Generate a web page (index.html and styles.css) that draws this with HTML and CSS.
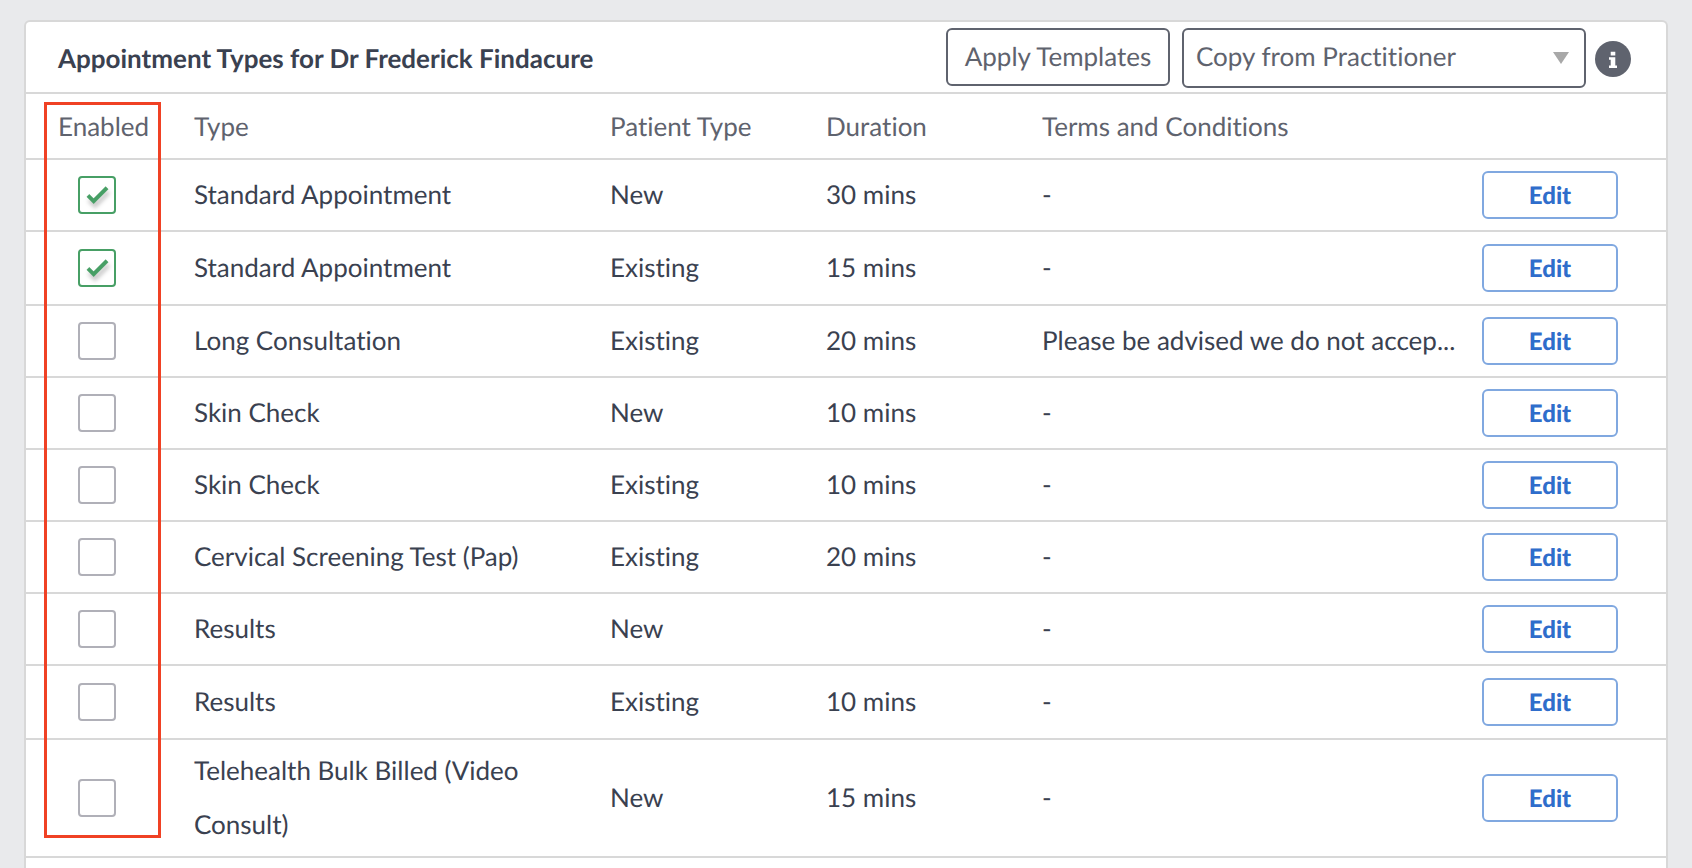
FILE: index.html
```html
<!DOCTYPE html>
<html lang="en">
<head>
  <meta charset="UTF-8">
  <meta name="viewport" content="width=device-width, initial-scale=1.0">
  <title>Appointment Types</title>
  <link rel="stylesheet" href="styles.css">
</head>
<body>
  <div class="card">
    <!-- Header -->
    <div class="card-header">
      <h1>Appointment Types for Dr Frederick Findacure</h1>
      <button type="button" class="btn-templates">Apply Templates</button>
      <div class="select-wrap">
        <select aria-label="Copy from Practitioner">
          <option>Copy from Practitioner</option>
        </select>
      </div>
      <button type="button" class="info" aria-label="Information">
        <svg viewBox="0 0 36 36" width="36" height="36">
          <circle cx="18" cy="18" r="18" fill="#5f636e"/>
          <path d="M15.700 10.700h4.600v3.900h-4.600z M14 16.300h6.300v8.200h1.700v2.500h-8v-2.500h1.700v-5.700h-1.700z" fill="#fff"/>
        </svg>
      </button>
    </div>

    <!-- Appointment types -->
    <div class="table-wrap">
      <table>
        <colgroup>
          <col class="col-enabled">
          <col class="col-type">
          <col class="col-patient">
          <col class="col-duration">
          <col class="col-terms">
          <col class="col-edit">
        </colgroup>
        <thead>
          <tr>
            <th>Enabled</th>
            <th>Type</th>
            <th>Patient Type</th>
            <th>Duration</th>
            <th>Terms and Conditions</th>
            <th></th>
          </tr>
        </thead>
        <tbody>
          <tr>
            <td><input type="checkbox" aria-label="Enable Standard Appointment, New" checked></td>
            <td>Standard Appointment</td>
            <td>New</td>
            <td>30 mins</td>
            <td class="terms">-</td>
            <td><button type="button" class="btn-edit">Edit</button></td>
          </tr>
          <tr>
            <td><input type="checkbox" aria-label="Enable Standard Appointment, Existing" checked></td>
            <td>Standard Appointment</td>
            <td>Existing</td>
            <td>15 mins</td>
            <td class="terms">-</td>
            <td><button type="button" class="btn-edit">Edit</button></td>
          </tr>
          <tr>
            <td><input type="checkbox" aria-label="Enable Long Consultation, Existing"></td>
            <td>Long Consultation</td>
            <td>Existing</td>
            <td>20 mins</td>
            <td class="terms">Please be advised we do not accep...</td>
            <td><button type="button" class="btn-edit">Edit</button></td>
          </tr>
          <tr>
            <td><input type="checkbox" aria-label="Enable Skin Check, New"></td>
            <td>Skin Check</td>
            <td>New</td>
            <td>10 mins</td>
            <td class="terms">-</td>
            <td><button type="button" class="btn-edit">Edit</button></td>
          </tr>
          <tr>
            <td><input type="checkbox" aria-label="Enable Skin Check, Existing"></td>
            <td>Skin Check</td>
            <td>Existing</td>
            <td>10 mins</td>
            <td class="terms">-</td>
            <td><button type="button" class="btn-edit">Edit</button></td>
          </tr>
          <tr>
            <td><input type="checkbox" aria-label="Enable Cervical Screening Test, Existing"></td>
            <td>Cervical Screening Test (Pap)</td>
            <td>Existing</td>
            <td>20 mins</td>
            <td class="terms">-</td>
            <td><button type="button" class="btn-edit">Edit</button></td>
          </tr>
          <tr>
            <td><input type="checkbox" aria-label="Enable Results, New"></td>
            <td>Results</td>
            <td>New</td>
            <td></td>
            <td class="terms">-</td>
            <td><button type="button" class="btn-edit">Edit</button></td>
          </tr>
          <tr>
            <td><input type="checkbox" aria-label="Enable Results, Existing"></td>
            <td>Results</td>
            <td>Existing</td>
            <td>10 mins</td>
            <td class="terms">-</td>
            <td><button type="button" class="btn-edit">Edit</button></td>
          </tr>
          <tr>
            <td><input type="checkbox" aria-label="Enable Telehealth Bulk Billed, New"></td>
            <td>Telehealth Bulk Billed (Video Consult)</td>
            <td>New</td>
            <td>15 mins</td>
            <td class="terms">-</td>
            <td><button type="button" class="btn-edit">Edit</button></td>
          </tr>
        </tbody>
      </table>
      <div class="highlight"></div>
    </div>
  </div>
</body>
</html>
```

FILE: styles.css
```css
*, *::before, *::after {
  box-sizing: border-box;
}

body {
  display: flex;
  flex-direction: column;
  min-height: 100vh;
  margin: 0;
  padding: 20px 24px 0;
  background: #e9eaec;
  color: #3a4150;
  font-family: Lato, "Liberation Sans", sans-serif;
  font-size: 26px;
  font-variant-ligatures: none;
  text-rendering: geometricPrecision;
}

button, select {
  font-family: inherit;
  font-size: 26px;
  font-variant-ligatures: none;
  text-rendering: geometricPrecision;
  cursor: pointer;
}

.card {
  flex: 1;
  background: #fff;
  border: 2px solid #d8d8d8;
  border-bottom: none;
  border-radius: 6px 6px 0 0;
}

/* Header */
.card-header {
  display: flex;
  align-items: flex-start;
  height: 72px;
  padding: 6px 35px 0 32px;
  border-bottom: 2px solid #d8d8d8;
}

h1 {
  flex: 1;
  margin: 0;
  font-size: 26px;
  line-height: 60px;
  font-weight: bold;
}

.btn-templates {
  width: 224px;
  height: 58px;
  margin-right: 12px;
  padding: 0 0 2px;
  background: #fff;
  color: #5f636e;
  border: 2px solid #5f636e;
  border-radius: 6px;
}

.select-wrap {
  position: relative;
  width: 404px;
}

.select-wrap::after {
  content: "";
  position: absolute;
  top: 24px;
  right: 17px;
  border: 8px solid transparent;
  border-top: 12px solid #a8a8a8;
  border-bottom: none;
  pointer-events: none;
}

select {
  display: block;
  width: 100%;
  height: 60px;
  padding: 0 12px 4px;
  appearance: none;
  background: #fff;
  color: #5f636e;
  border: 2px solid #5f636e;
  border-radius: 6px;
}

.info {
  height: 36px;
  margin: 13px 0 0 9px;
  padding: 0;
  background: none;
  border: none;
}

.info svg {
  display: block;
}

/* Table */
.table-wrap {
  position: relative;
}

table {
  width: 100%;
  table-layout: fixed;
  border-collapse: separate;
  border-spacing: 0;
}

.col-enabled {
  width: 168px;
}

.col-type {
  width: 416px;
}

.col-patient, .col-duration {
  width: 216px;
}

.col-edit {
  width: 184px;
}

th, td {
  height: 72px;
  padding: 3px 48px 5px 0;
  border-bottom: 2px solid #d8d8d8;
  line-height: 54px;
  text-align: left;
  vertical-align: middle;
}

tr:nth-child(6n+2) td {
  height: 74px;
}

th {
  height: 66px;
  padding: 4px 0;
  color: #5f636e;
  font-weight: normal;
}

th:first-child {
  padding-left: 32px;
}

td:first-child {
  padding: 4px 0 4px 52px;
}

td:last-child {
  padding: 4px 0;
}

td.terms {
  padding-right: 0;
  white-space: nowrap;
}

input[type="checkbox"] {
  display: block;
  width: 38px;
  height: 38px;
  margin: 0;
  appearance: none;
  background: #fff;
  border: 2px solid #b0b0b8;
  border-radius: 4px;
  cursor: pointer;
}

input[type="checkbox"]:checked {
  border-color: #479f65;
}

/* Tick mark */
input[type="checkbox"]:checked::before {
  content: "";
  display: block;
  width: 21px;
  height: 10px;
  margin: 10px 0 0 7px;
  border: solid #479f65;
  border-width: 0 0 4px 4px;
  transform: rotate(-45deg);
  filter: drop-shadow(-2px 4px 2px rgba(0, 0, 0, 0.25));
}

.btn-edit {
  display: block;
  width: 136px;
  height: 48px;
  padding: 0;
  background: #fff;
  color: #2f6dcb;
  border: 2px solid #80a8e0;
  border-radius: 6px;
  font-size: 24px;
  font-weight: 900;
}

/* Box around the Enabled column */
.highlight {
  position: absolute;
  top: 8px;
  bottom: 20px;
  left: 18px;
  width: 117px;
  border: 3px solid #f04124;
  pointer-events: none;
}
```
